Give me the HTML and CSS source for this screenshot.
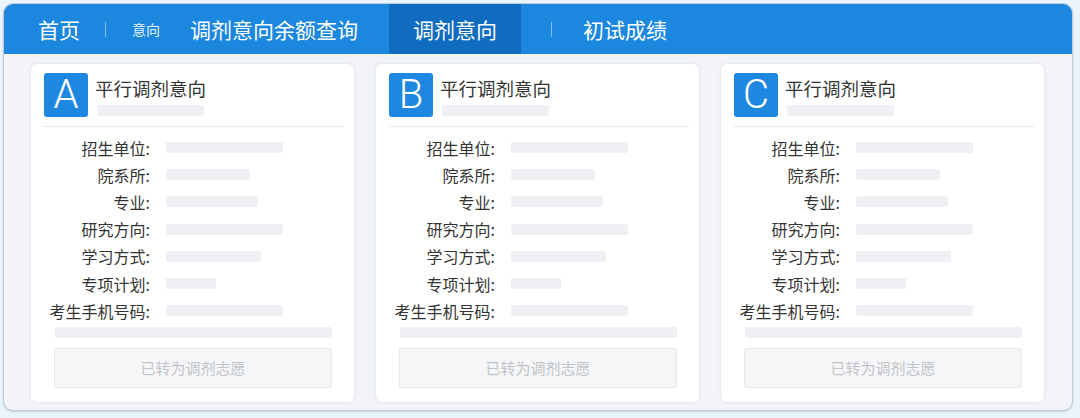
FILE: index.html
```html
<!DOCTYPE html>
<html lang="zh">
<head>
<meta charset="utf-8">
<link rel="stylesheet" href="styles.css">
</head>
<body>
<div class="panel">
  <nav class="nav">
    <span class="nav-item home">首页</span>
    <span class="divider d1"></span>
    <span class="nav-item small">意向</span>
    <span class="nav-item quota">调剂意向余额查询</span>
    <span class="nav-item active">调剂意向</span>
    <span class="divider d2"></span>
    <span class="nav-item score">初试成绩</span>
  </nav>
  <div class="cards">
    <div class="card">
      <div class="card-head">
        <div class="badge">A</div>
        <div class="head-text">
          <div class="title">平行调剂意向</div>
          <div class="ph ph-sub"></div>
        </div>
      </div>
      <div class="rows">
        <div class="row"><span class="label">招生单位:</span><span class="ph" style="width:117px"></span></div>
        <div class="row"><span class="label">院系所:</span><span class="ph" style="width:84px"></span></div>
        <div class="row"><span class="label">专业:</span><span class="ph" style="width:92px"></span></div>
        <div class="row"><span class="label">研究方向:</span><span class="ph" style="width:117px"></span></div>
        <div class="row"><span class="label">学习方式:</span><span class="ph" style="width:95px"></span></div>
        <div class="row"><span class="label">专项计划:</span><span class="ph" style="width:50px"></span></div>
        <div class="row"><span class="label">考生手机号码:</span><span class="ph" style="width:117px"></span></div>
      </div>
      <div class="ph ph-wide"></div>
      <div class="btn">已转为调剂志愿</div>
    </div>
    <div class="card">
      <div class="card-head">
        <div class="badge">B</div>
        <div class="head-text">
          <div class="title">平行调剂意向</div>
          <div class="ph ph-sub"></div>
        </div>
      </div>
      <div class="rows">
        <div class="row"><span class="label">招生单位:</span><span class="ph" style="width:117px"></span></div>
        <div class="row"><span class="label">院系所:</span><span class="ph" style="width:84px"></span></div>
        <div class="row"><span class="label">专业:</span><span class="ph" style="width:92px"></span></div>
        <div class="row"><span class="label">研究方向:</span><span class="ph" style="width:117px"></span></div>
        <div class="row"><span class="label">学习方式:</span><span class="ph" style="width:95px"></span></div>
        <div class="row"><span class="label">专项计划:</span><span class="ph" style="width:50px"></span></div>
        <div class="row"><span class="label">考生手机号码:</span><span class="ph" style="width:117px"></span></div>
      </div>
      <div class="ph ph-wide"></div>
      <div class="btn">已转为调剂志愿</div>
    </div>
    <div class="card">
      <div class="card-head">
        <div class="badge">C</div>
        <div class="head-text">
          <div class="title">平行调剂意向</div>
          <div class="ph ph-sub"></div>
        </div>
      </div>
      <div class="rows">
        <div class="row"><span class="label">招生单位:</span><span class="ph" style="width:117px"></span></div>
        <div class="row"><span class="label">院系所:</span><span class="ph" style="width:84px"></span></div>
        <div class="row"><span class="label">专业:</span><span class="ph" style="width:92px"></span></div>
        <div class="row"><span class="label">研究方向:</span><span class="ph" style="width:117px"></span></div>
        <div class="row"><span class="label">学习方式:</span><span class="ph" style="width:95px"></span></div>
        <div class="row"><span class="label">专项计划:</span><span class="ph" style="width:50px"></span></div>
        <div class="row"><span class="label">考生手机号码:</span><span class="ph" style="width:117px"></span></div>
      </div>
      <div class="ph ph-wide"></div>
      <div class="btn">已转为调剂志愿</div>
    </div>
  </div>
</div>
</body>
</html>
```

FILE: styles.css
```css
* { box-sizing: border-box; }
html, body {
  margin: 0;
  padding: 0;
  background: #eaf5fb;
  font-family: "Noto Sans CJK SC", "Noto Sans", sans-serif;
}
body { padding: 3px; }
.panel {
  width: 1070px;
  height: 408px;
  background: #f2f4f7;
  border: 1px solid #c3ccd6;
  border-radius: 10px;
  overflow: hidden;
  box-shadow: 0 1px 2px rgba(120,135,150,0.35);
}
.nav {
  height: 50px;
  background: #1b87de;
  display: flex;
  align-items: center;
  padding-left: 34px;
  color: #fff;
}
.nav-item {
  font-size: 21px;
  line-height: 50px;
  white-space: nowrap;
}
.nav-item.small { font-size: 14px; margin-left: 26px; color: #e6f1fb; }
.nav-item.quota { margin-left: 30px; }
.nav-item.active {
  margin-left: 31px;
  padding: 0 24px;
  background: #0f6cbf;
  height: 50px;
}
.nav-item.score { margin-left: 31px; }
.divider {
  width: 1px;
  height: 15px;
  background: rgba(255,255,255,0.45);
}
.d1 { margin-left: 25px; }
.d2 { margin-left: 30px; }
.cards {
  display: flex;
  gap: 22px;
  padding: 10px 0 0 27px;
}
.card {
  width: 323px;
  height: 338px;
  background: #fff;
  border-radius: 6px;
  box-shadow: 0 0 3px rgba(160,170,185,0.35);
  padding: 9px 10px 0 13px;
}
.card-head {
  display: flex;
  align-items: flex-start;
  padding-bottom: 9px;
  border-bottom: 1px solid #e8eaed;
}
.badge {
  width: 44px;
  height: 44px;
  background: #1e87df;
  border-radius: 3px;
  color: #fff;
  font-family: Roboto, "Liberation Sans", sans-serif;
  font-weight: 300;
  font-size: 40px;
  line-height: 44px;
  text-align: center;
}
.head-text { margin-left: 7px; padding-top: 4px; }
.title {
  font-size: 18.5px;
  line-height: 22px;
  color: #333;
}
.ph {
  display: block;
  height: 11px;
  background: #eef0f3;
  border-radius: 2px;
}
.ph-sub { width: 107px; margin-top: 6px; margin-left: 2px; }
.rows { padding-top: 7px; }
.row {
  display: flex;
  align-items: center;
  height: 27.2px;
}
.label {
  width: 106px;
  text-align: right;
  font-size: 16px;
  color: #333;
  white-space: nowrap;
}
.row .ph { margin-left: 16px; }
.ph-wide { width: 277px; margin: 3px 0 0 11px; }
.btn {
  width: 278px;
  height: 40px;
  margin: 10px 0 0 10px;
  background: #f5f6f8;
  border: 1px solid #e6e8eb;
  border-radius: 2px;
  color: #c2c4c7;
  font-size: 15px;
  line-height: 38px;
  text-align: center;
}
```
